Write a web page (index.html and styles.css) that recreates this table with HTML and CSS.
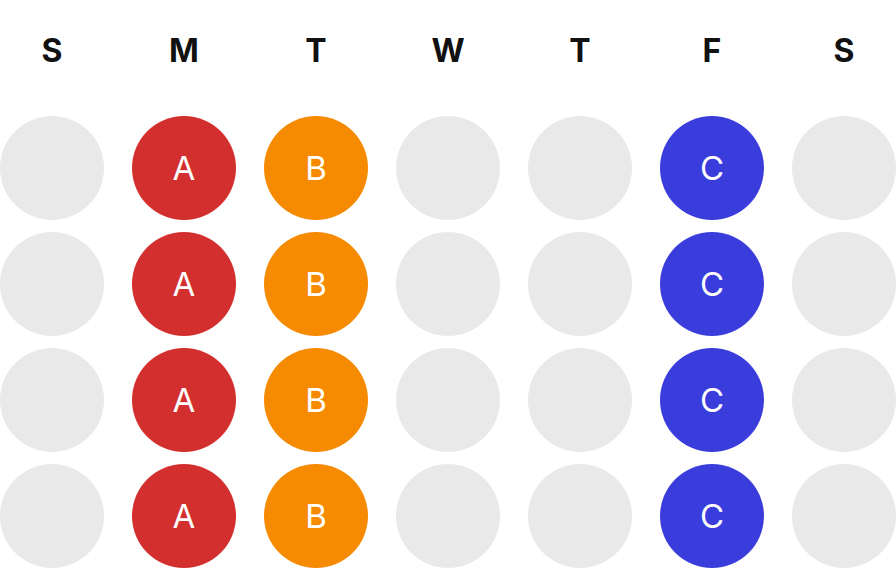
FILE: index.html
```html
<!DOCTYPE html>
<html>
<head>
<meta charset="utf-8">
<link rel="stylesheet" href="styles.css">
</head>
<body>
<div class="grid">
  <div class="day">S</div><div class="day">M</div><div class="day">T</div><div class="day">W</div><div class="day">T</div><div class="day">F</div><div class="day">S</div>

  <div class="dot"></div><div class="dot a">A</div><div class="dot b">B</div><div class="dot"></div><div class="dot"></div><div class="dot c">C</div><div class="dot"></div>
  <div class="dot"></div><div class="dot a">A</div><div class="dot b">B</div><div class="dot"></div><div class="dot"></div><div class="dot c">C</div><div class="dot"></div>
  <div class="dot"></div><div class="dot a">A</div><div class="dot b">B</div><div class="dot"></div><div class="dot"></div><div class="dot c">C</div><div class="dot"></div>
  <div class="dot"></div><div class="dot a">A</div><div class="dot b">B</div><div class="dot"></div><div class="dot"></div><div class="dot c">C</div><div class="dot"></div>
</div>
</body>
</html>
```

FILE: styles.css
```css
html, body {
  margin: 0;
  padding: 0;
  background: #ffffff;
}
body {
  font-family: Inter, "Liberation Sans", sans-serif;
}
.grid {
  display: grid;
  grid-template-columns: repeat(7, 104px);
  grid-auto-rows: 104px;
  column-gap: 28px;
  row-gap: 12px;
  width: 896px;
}
.day {
  display: flex;
  align-items: center;
  justify-content: center;
  padding-bottom: 4px;
  box-sizing: border-box;
  font-size: 32px;
  font-weight: 700;
  color: #111111;
}
.dot {
  width: 104px;
  height: 104px;
  border-radius: 50%;
  background: #e9e9e9;
  display: flex;
  align-items: center;
  justify-content: center;
  color: #ffffff;
  font-size: 33px;
  font-weight: 400;
}
.a { background: #d32f2f; }
.b { background: #f68a00; }
.c { background: #3a3ddb; }
```
